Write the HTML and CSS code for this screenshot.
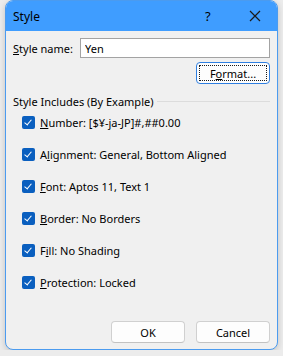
FILE: index.html
```html
<!DOCTYPE html>
<html lang="en">
<head>
    <meta charset="UTF-8">
    <title>Style</title>
    <link rel="stylesheet" href="styles.css">
</head>
<body>
<div class="window">
    <div class="titlebar">
        <span class="title">Style</span>
        <span class="help">?</span>
        <span class="close">
            <svg width="12" height="12" viewBox="0 0 12 12"><path d="M1 1L11 11M11 1L1 11" stroke="#1a1a1a" stroke-width="1.2"/></svg>
        </span>
    </div>
    <div class="content">
        <div class="name-row">
            <label for="style_name"><u>S</u>tyle name:</label>
            <input type="text" id="style_name" value="Yen">
        </div>
        <div class="format-row">
            <button class="button focused"><span class="focus-ring">F<u>o</u>rmat...</span></button>
        </div>
        <div class="group-title">
            <span>Style Includes (By Example)</span>
            <span class="rule"></span>
        </div>
        <div class="checks">
            <div class="check"><span class="box"></span><span><u>N</u>umber: [$¥-ja-JP]#,##0.00</span></div>
            <div class="check"><span class="box"></span><span>A<u>l</u>ignment: General, Bottom Aligned</span></div>
            <div class="check"><span class="box"></span><span><u>F</u>ont: Aptos 11, Text 1</span></div>
            <div class="check"><span class="box"></span><span><u>B</u>order: No Borders</span></div>
            <div class="check"><span class="box"></span><span>F<u>i</u>ll: No Shading</span></div>
            <div class="check"><span class="box"></span><span><u>P</u>rotection: Locked</span></div>
        </div>
        <div class="actions">
            <button class="button">OK</button>
            <button class="button">Cancel</button>
        </div>
    </div>
</div>
</body>
</html>
```

FILE: styles.css
```css
body, html {
    margin: 0;
    padding: 0;
    background-color: #ececec;
    font-family: 'Noto Sans', 'Liberation Sans', sans-serif;
    font-size: 11px;
    line-height: 15px;
    color: #000000;
}
.window {
    margin-left: 5px;
    width: 273px;
    height: 350px;
    box-sizing: border-box;
    border: 1px solid #4b9bef;
    border-radius: 8px;
    background-color: #f0f0f0;
    overflow: hidden;
    display: flex;
    flex-direction: column;
    box-shadow: 0 2px 6px rgba(0, 0, 0, 0.18);
}
.titlebar {
    height: 30px;
    background-color: #3f9dff;
    display: flex;
    align-items: center;
    padding-left: 7px;
    flex-shrink: 0;
}
.title {
    flex: 1;
    font-size: 12px;
    margin-top: 1px;
}
.help {
    font-size: 13px;
    width: 16px;
    margin-right: 28px;
}
.close {
    display: flex;
    width: 12px;
    margin-right: 16px;
}
.content {
    flex: 1;
    display: flex;
    flex-direction: column;
    padding: 7px 7px 6px 7px;
}
.name-row {
    display: flex;
    align-items: center;
    height: 20px;
}
.name-row label {
    width: 67px;
}
.name-row input {
    flex: 1;
    height: 20px;
    box-sizing: border-box;
    border: 1px solid #a3a3a3;
    background-color: #ffffff;
    font-family: inherit;
    font-size: 11px;
    padding: 0 4px;
    outline: none;
    color: #000000;
}
.format-row {
    display: flex;
    justify-content: flex-end;
    margin-top: 4px;
}
.button {
    font-family: inherit;
    font-size: 11px;
    color: #000000;
    background-color: #fdfdfd;
    border: 1px solid #d0d0d0;
    border-bottom-color: #c2c2c2;
    border-radius: 4px;
    height: 22px;
    padding: 0;
    width: 74px;
}
.button.focused {
    border: 1px solid #2f7fe0;
    padding: 2px;
    height: 22px;
}
.focus-ring {
    display: flex;
    align-items: center;
    justify-content: center;
    height: 100%;
    box-sizing: border-box;
    border: 1px dotted #1a1a1a;
}
.group-title {
    display: flex;
    align-items: center;
    margin-top: 10px;
    gap: 4px;
}
.rule {
    flex: 1;
    height: 1px;
    background-color: #dcdcdc;
}
.checks {
    display: flex;
    flex-direction: column;
    gap: 15px;
    margin-top: 5px;
    padding-left: 9px;
}
.check {
    display: flex;
    align-items: center;
    gap: 5px;
    height: 17px;
}
.box {
    width: 13px;
    height: 13px;
    border-radius: 2px;
    background-color: #0a5fbf;
    position: relative;
    flex-shrink: 0;
}
.box::after {
    content: "";
    position: absolute;
    left: 4px;
    top: 2px;
    width: 3px;
    height: 6px;
    border: solid #ffffff;
    border-width: 0 1px 1px 0;
    transform: rotate(40deg);
}
.actions {
    margin-top: auto;
    display: flex;
    justify-content: flex-end;
    gap: 11px;
}
.actions .button {
    width: 74px;
}
```
